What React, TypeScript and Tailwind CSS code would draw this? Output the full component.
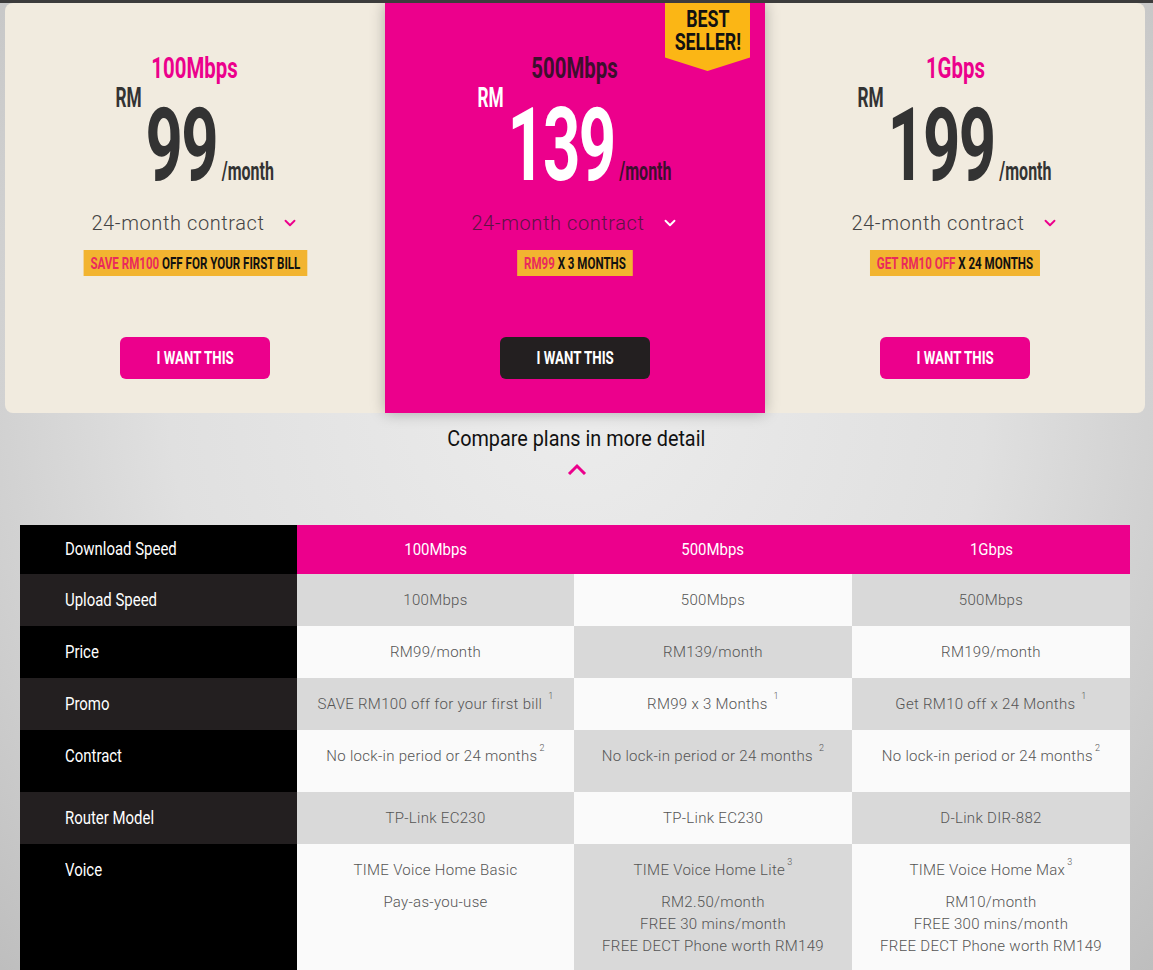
import { ChevronDown } from "lucide-react";

const din = "font-['Roboto','Noto_Sans',sans-serif]";

type Plan = {
  speed: string;
  price: string;
  promoHot: string;
  promoRest: string;
  featured?: boolean;
};

const plans: Plan[] = [
  { speed: "100Mbps", price: "99", promoHot: "SAVE RM100", promoRest: " OFF FOR YOUR FIRST BILL" },
  { speed: "500Mbps", price: "139", promoHot: "RM99", promoRest: " X 3 MONTHS", featured: true },
  { speed: "1Gbps", price: "199", promoHot: "GET RM10 OFF", promoRest: " X 24 MONTHS" },
];

function Sup({ n }: { n: string }) {
  return <sup className="ml-[2px] text-[9px] align-super leading-none">{n}</sup>;
}

function PlanCard({ plan, index }: { plan: Plan; index: number }) {
  const f = plan.featured;
  const shape =
    index === 0
      ? "rounded-l-lg bg-[#f1ebdf]"
      : index === 2
        ? "rounded-r-lg bg-[#f1ebdf]"
        : "bg-[#ec008c] z-10 shadow-[0_0_14px_rgba(0,0,0,0.28)]";
  return (
    <div className={`relative flex h-[410px] w-[380px] flex-col items-center pt-[48px] ${shape}`}>
      {f && (
        <div className="absolute top-0 right-[15px] flex h-[68px] w-[85px] justify-center bg-[#fbb615] pt-[5px] [clip-path:polygon(0_0,100%_0,100%_80%,50%_100%,0_80%)]">
          <span className={`${din} inline-block scale-x-[0.74] text-center text-[24px] font-bold leading-[23px] text-[#111]`}>
            BEST
            <br />
            SELLER!
          </span>
        </div>
      )}
      <h3
        className={`${din} inline-block scale-x-[0.68] text-[30px] font-bold leading-[34px] ${f ? "text-[#3d0f2e]" : "text-[#ec008c]"}`}
      >
        {plan.speed}
      </h3>
      <div className={`${din} mt-[9px] flex scale-x-[0.64] items-start font-bold`}>
        <span className={`-mt-[9px] text-[27px] leading-none ${f ? "text-white" : "text-[#333]"}`}>RM</span>
        <span className={`ml-[6px] text-[102px] leading-[102px] tracking-[-3px] ${f ? "text-white" : "text-[#333]"}`}>
          {plan.price}
        </span>
        <span className={`ml-[8px] mb-[12px] self-end text-[25px] leading-none ${f ? "text-[#3d0f2e]" : "text-[#333]"}`}>
          /month
        </span>
      </div>
      <div className="mt-[13px] flex items-center gap-[16px]">
        <span className={`${din} text-[20px] font-light leading-[28px] tracking-[0.6px] ${f ? "text-[#5e1345]" : "text-[#444]"}`}>
          24-month contract
        </span>
        <ChevronDown size={18} strokeWidth={2.5} className={f ? "text-white" : "text-[#ec008c]"} />
      </div>
      <div
        className={`${din} mt-[13px] scale-x-[0.68] bg-[#f2b430] px-[10px] text-[17px] font-bold leading-[26px] whitespace-nowrap text-[#111]`}
      >
        <span className="text-[#ea2a5c]">{plan.promoHot}</span>
        {plan.promoRest}
      </div>
      <button
        type="button"
        className={`mt-[61px] h-[42px] w-[150px] rounded-md ${f ? "bg-[#231f20]" : "bg-[#ec008c]"}`}
      >
        <span className={`${din} inline-block scale-x-[0.7] text-[19px] font-bold text-white`}>I WANT THIS</span>
      </button>
    </div>
  );
}

type Row = { label: string; h: string; cells: React.ReactNode[] };

const rows: Row[] = [
  { label: "Upload Speed", h: "h-[52px]", cells: ["100Mbps", "500Mbps", "500Mbps"] },
  { label: "Price", h: "h-[52px]", cells: ["RM99/month", "RM139/month", "RM199/month"] },
  {
    label: "Promo",
    h: "h-[52px]",
    cells: [
      <>SAVE RM100 off for your first bill <Sup n="1" /></>,
      <>RM99 x 3 Months <Sup n="1" /></>,
      <>Get RM10 off x 24 Months <Sup n="1" /></>,
    ],
  },
  {
    label: "Contract",
    h: "h-[62px]",
    cells: [
      <>No lock-in period or 24 months<Sup n="2" /></>,
      <>No lock-in period or 24 months <Sup n="2" /></>,
      <>No lock-in period or 24 months<Sup n="2" /></>,
    ],
  },
  { label: "Router Model", h: "h-[52px]", cells: ["TP-Link EC230", "TP-Link EC230", "D-Link DIR-882"] },
  {
    label: "Voice",
    h: "h-[140px]",
    cells: [
      <>
        <p>TIME Voice Home Basic</p>
        <p className="mt-[8px]">Pay-as-you-use</p>
      </>,
      <>
        <p>TIME Voice Home Lite<Sup n="3" /></p>
        <div className="mt-[9px] leading-[22px]">
          <p>RM2.50/month</p>
          <p>FREE 30 mins/month</p>
          <p>FREE DECT Phone worth RM149</p>
        </div>
      </>,
      <>
        <p>TIME Voice Home Max<Sup n="3" /></p>
        <div className="mt-[9px] leading-[22px]">
          <p>RM10/month</p>
          <p>FREE 300 mins/month</p>
          <p>FREE DECT Phone worth RM149</p>
        </div>
      </>,
    ],
  },
];

export default function App() {
  return (
    <div className="min-h-[970px] w-full overflow-hidden border-t-[3px] border-[#3c3c3c] bg-[radial-gradient(ellipse_at_50%_40%,#ececec_0%,#e0e0e0_50%,#bdbdbd_100%)]">
      <div className="mx-[5px] flex w-[1140px]">
        {plans.map((p, i) => (
          <PlanCard key={p.speed} plan={p} index={i} />
        ))}
      </div>

      <div className="flex flex-col items-center">
        <p className={`${din} mt-[12px] inline-block scale-x-[0.9] text-[22px] leading-[28px] text-[#111]`}>
          Compare plans in more detail
        </p>
        <svg width="20" height="12" viewBox="0 0 20 12" className="mt-[10px]">
          <path d="M2 11 L10 3 L18 11" fill="none" stroke="#ec008c" strokeWidth="3" />
        </svg>
      </div>

      <div className="mx-[20px] mt-[50px] w-[1110px]">
        <div className="grid h-[49px] grid-cols-[277px_277px_278px_278px]">
          <div className={`${din} bg-black pt-[12px] pl-[45px] text-[18px] leading-[24px] text-white`}>
            <span className="inline-block origin-left scale-x-[0.83]">Download Speed</span>
          </div>
          {["100Mbps", "500Mbps", "1Gbps"].map((s) => (
            <div key={s} className={`${din} bg-[#ec008c] pt-[12px] text-center text-[17px] leading-[24px] text-white`}>
              <span className="inline-block scale-x-[0.88]">{s}</span>
            </div>
          ))}
        </div>
        {rows.map((r, ri) => (
          <div key={r.label} className={`grid grid-cols-[277px_277px_278px_278px] ${r.h}`}>
            <div
              className={`${din} pt-[14px] pl-[45px] text-[18px] leading-[24px] text-white ${ri % 2 === 0 ? "bg-[#231f20]" : "bg-black"}`}
            >
              <span className="inline-block origin-left scale-x-[0.83]">{r.label}</span>
            </div>
            {r.cells.map((c, ci) => (
              <div
                key={ci}
                className={`${din} pt-[14px] text-center text-[15px] font-light leading-[24px] tracking-[0.3px] text-[#555] ${
                  (ri + ci) % 2 === 0 ? "bg-[#d9d9d9]" : "bg-[#fafafa]"
                }`}
              >
                {c}
              </div>
            ))}
          </div>
        ))}
      </div>
    </div>
  );
}
